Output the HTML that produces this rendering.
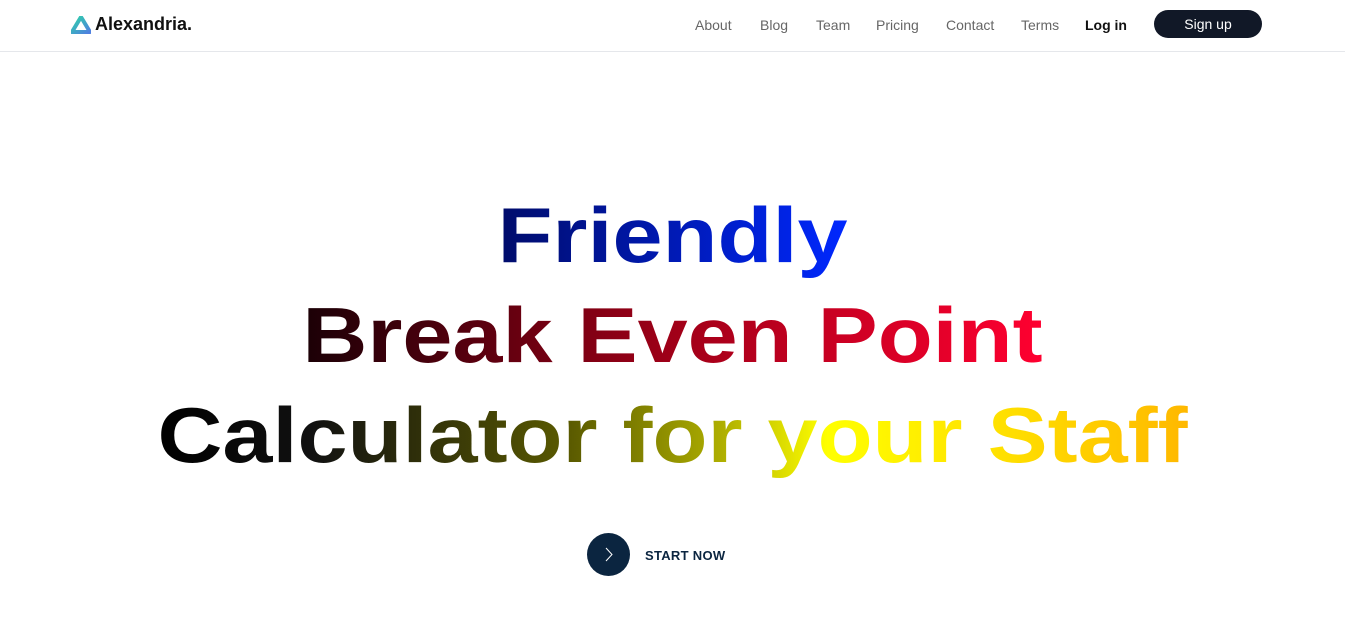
<!DOCTYPE html>
<html><head><meta charset="utf-8"><style>
*{margin:0;padding:0;box-sizing:border-box}
body{width:1345px;height:619px;background:#fff;font-family:"Liberation Sans",sans-serif;overflow:hidden;position:relative}
header{height:52px;border-bottom:1px solid #e5e7eb;position:relative}
.logo{position:absolute;left:71px;top:14px;display:flex;align-items:center;font-weight:bold;font-size:18px;color:#111}
.logo svg{margin-right:4px}
nav{position:absolute;top:17px;left:695px;font-size:14px;color:#666;}
nav span{position:absolute;white-space:nowrap}
.btn{position:absolute;left:1154px;top:10px;width:108px;height:28px;border-radius:14px;background:#111827;color:#fff;font-size:14px;text-align:center;line-height:28px}
.h{position:absolute;left:0;width:1345px;text-align:center;font-weight:bold;font-size:90px;line-height:100px;transform:scaleY(0.87);transform-origin:50% 81px}
.h span{-webkit-background-clip:text;background-clip:text;color:transparent}
.l1{top:182px}.l1 span{background-image:linear-gradient(90deg,#000c6a,#0028ff)}
.l2{top:282px}.l2 span{background-image:linear-gradient(90deg,#1a0006,#a00018 50%,#ff0030)}
.l3{top:382px}.l3 span{background-image:linear-gradient(90deg,#000 0%,#111 15%,#5a5a00 40%,#b0b000 55%,#ffff00 65%,#ffe000 82%,#ffb800 100%)}
.cta{position:absolute;left:587px;top:533px;width:43px;height:43px;border-radius:50%;background:#0b2540}
.ct{position:absolute;left:645px;top:548px;font-weight:bold;font-size:13px;color:#0b2540;letter-spacing:.3px}
</style></head><body>
<header>
<div class="logo"><svg width="20" height="18" viewBox="0 0 20 18"><defs><linearGradient id="g" x1="0" y1="0" x2="1" y2="1"><stop offset="0" stop-color="#2dd4a8"/><stop offset="1" stop-color="#4f7fe0"/></linearGradient></defs><path d="M10 1 L19 16 L1 16 Z" fill="none" stroke="url(#g)" stroke-width="4" stroke-linejoin="round"/></svg>Alexandria.</div>
<nav><span style="left:0">About</span><span style="left:65px">Blog</span><span style="left:121px">Team</span><span style="left:181px">Pricing</span><span style="left:251px">Contact</span><span style="left:326px">Terms</span><span style="left:390px;color:#111;font-weight:bold">Log in</span></nav>
<div class="btn">Sign up</div>
</header>
<div class="h l1"><span>Friendly</span></div>
<div class="h l2"><span>Break Even Point</span></div>
<div class="h l3"><span>Calculator for your Staff</span></div>
<div class="cta"><svg width="43" height="43" viewBox="0 0 43 43"><path d="M19 15 L25 21.5 L19 28" fill="none" stroke="#fff" stroke-width="1"/></svg></div>
<div class="ct">START NOW</div>
</body></html>
